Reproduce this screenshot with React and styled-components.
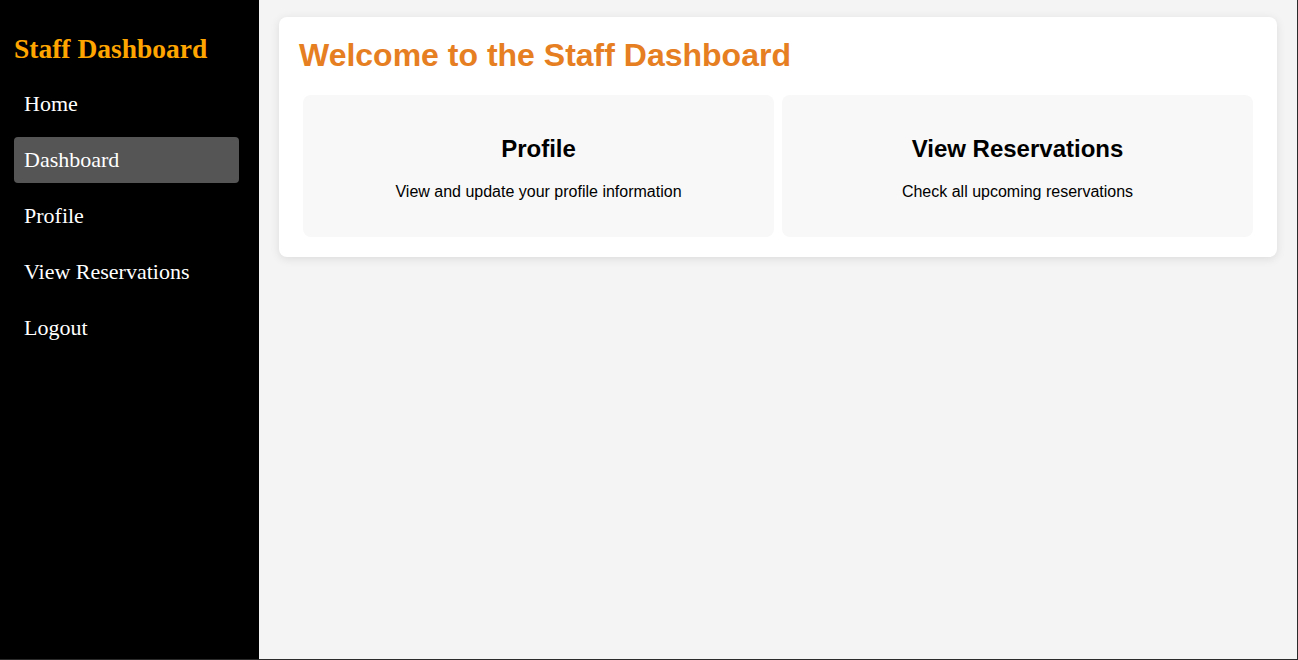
import React from 'react'
import styled, { createGlobalStyle } from 'styled-components'

const GlobalStyle = createGlobalStyle`
  html, body {
    margin: 0;
    padding: 0;
  }
  * {
    box-sizing: border-box;
  }
`

const navItems = ['Home', 'Dashboard', 'Profile', 'View Reservations', 'Logout']

const cards = [
  { title: 'Profile', text: 'View and update your profile information' },
  { title: 'View Reservations', text: 'Check all upcoming reservations' },
]

const App = () => {
  return (
    <>
      <GlobalStyle />
      <Shell>
        <Sidebar>
          <Brand>Staff Dashboard</Brand>
          <Nav>
            {navItems.map((item) => (
              <NavItem key={item} $active={item === 'Dashboard'}>
                {item}
              </NavItem>
            ))}
          </Nav>
        </Sidebar>
        <Main>
          <Panel>
            <Heading>Welcome to the Staff Dashboard</Heading>
            <CardGrid>
              {cards.map((card) => (
                <Card key={card.title}>
                  <CardTitle>{card.title}</CardTitle>
                  <CardText>{card.text}</CardText>
                </Card>
              ))}
            </CardGrid>
          </Panel>
        </Main>
      </Shell>
    </>
  )
}

export default App

const Shell = styled.div`
  display: flex;
  width: 100vw;
  height: 100vh;
  border-right: 1px solid #2b2b2b;
  border-bottom: 1px solid #2b2b2b;
  overflow: hidden;
`
const Sidebar = styled.aside`
  width: 259px;
  flex-shrink: 0;
  background-color: #000;
  padding: 35px 20px 0 14px;
  font-family: 'Liberation Serif', 'Times New Roman', serif;
`
const Brand = styled.h2`
  margin: 0 0 18px;
  font-size: 27.5px;
  line-height: 28px;
  font-weight: bold;
  color: #ffa500;
  white-space: nowrap;
`
const Nav = styled.nav`
  display: flex;
  flex-direction: column;
  gap: 10px;
`
const NavItem = styled.a`
  display: block;
  padding: 11px 10px;
  line-height: 24px;
  font-size: 22px;
  color: #fff;
  border-radius: 4px;
  background-color: ${(p) => (p.$active ? '#555555' : 'transparent')};
  cursor: pointer;
`
const Main = styled.main`
  flex: 1;
  background-color: #f4f4f4;
  padding: 17px 20px 20px 20px;
`
const Panel = styled.section`
  background-color: #fff;
  border-radius: 8px;
  padding: 20px;
  box-shadow: 0 2px 10px rgba(0, 0, 0, 0.1);
  font-family: 'Liberation Sans', Arial, sans-serif;
`
const Heading = styled.h1`
  margin: 0 0 21px;
  font-size: 32px;
  line-height: 37px;
  font-weight: bold;
  color: #e67e22;
`
const CardGrid = styled.div`
  display: grid;
  grid-template-columns: 1fr 1fr;
  gap: 8px;
  padding: 0 4px;
`
const Card = styled.div`
  background-color: #f8f8f8;
  border-radius: 8px;
  padding: 20px;
  text-align: center;
  color: #000;
`
const CardTitle = styled.h2`
  margin: 20px 0;
  font-size: 24px;
  line-height: 28px;
  font-weight: bold;
`
const CardText = styled.p`
  margin: 0 0 16px;
  font-size: 16px;
  line-height: 18px;
`
